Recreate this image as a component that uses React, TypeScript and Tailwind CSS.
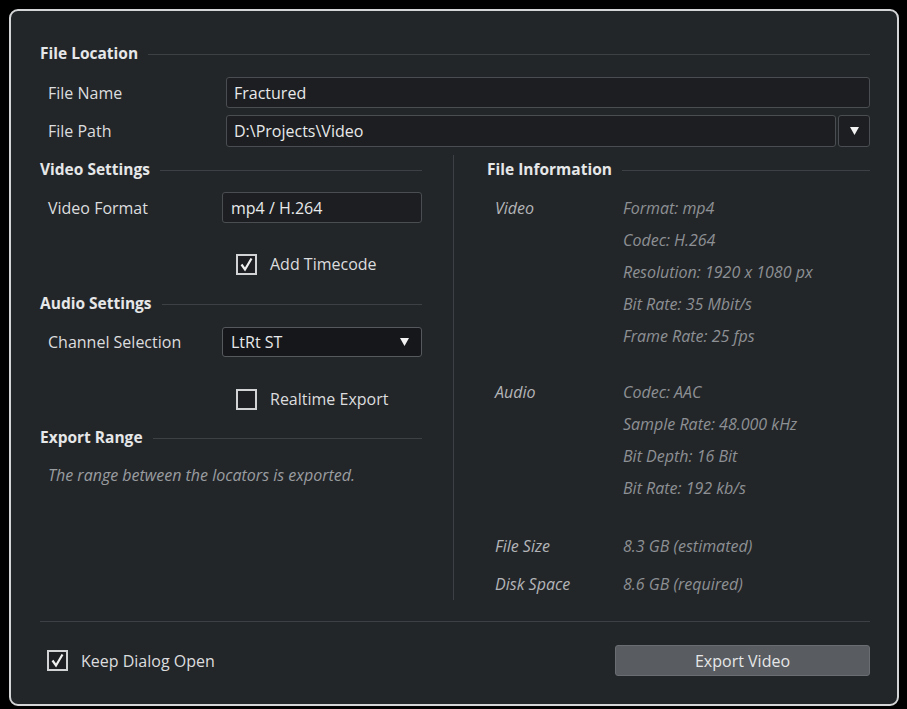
import React from "react";

const font = { fontFamily: '"Open Sans", "Liberation Sans", sans-serif' };

function SectionHeader({ title }: { title: string }) {
  return (
    <div className="flex h-5 items-center gap-[10px]">
      <span className="text-[15.5px] font-bold leading-5 text-[#e6e7e8]">{title}</span>
      <div className="mt-[3px] h-px flex-1 bg-[#3d4044]" />
    </div>
  );
}

function Check({ checked }: { checked: boolean }) {
  return (
    <div className="flex h-[21px] w-[21px] items-center justify-center border-2 border-[#d2d3d4] bg-[#1d1f22]">
      {checked && (
        <svg width="15" height="15" viewBox="0 0 15 15">
          <path d="M2.5 7.5 L6 12.5 L12.5 1.5" fill="none" stroke="#f0f0f0" strokeWidth="2.2" />
        </svg>
      )}
    </div>
  );
}

function Triangle() {
  return (
    <svg width="9" height="8" viewBox="0 0 9 8">
      <path d="M0 0 H9 L4.5 8 Z" fill="#f2f2f2" />
    </svg>
  );
}

function InfoRow({ label, value }: { label?: string; value: string }) {
  return (
    <div className="flex h-8 items-center pl-[8px] text-[16px] italic">
      <span className="w-[128px] text-[#b3b5b8]">{label}</span>
      <span className="text-[#8d9094]">{value}</span>
    </div>
  );
}

export default function App() {
  return (
    <div className="h-[709px] w-[907px] bg-black pl-[9px] pt-[9px]" style={font}>
      <div className="flex h-[697px] w-[890px] flex-col rounded-[9px] border-2 border-[#d4d5d6] bg-[#232629] pl-[29px] pr-[27px] pt-[32px]">
        <SectionHeader title="File Location" />

        <div className="mt-[14px] flex h-[31px] items-center">
          <span className="w-[186px] pl-[8px] text-[16px] text-[#dcdddf]">File Name</span>
          <div className="flex h-full flex-1 items-center rounded-[3px] border border-[#4a4d51] bg-[#1c1e21] px-[7px] text-[16px] text-[#e8e9ea]">
            Fractured
          </div>
        </div>

        <div className="mt-[7px] flex h-[32px] items-center">
          <span className="w-[186px] pl-[8px] text-[16px] text-[#dcdddf]">File Path</span>
          <div className="flex h-full flex-1 items-center rounded-[3px] border border-[#4a4d51] bg-[#1c1e21] px-[7px] text-[16px] text-[#e8e9ea]">
            D:\Projects\Video
          </div>
          <div className="ml-[2px] flex h-full w-[32px] items-center justify-center rounded-[3px] border border-[#4a4d51] bg-[#1c1e21]">
            <Triangle />
          </div>
        </div>

        <div className="mt-[8px] flex h-[445px]">
          {/* left: video / audio settings and export range */}
          <div className="flex w-[382px] flex-col pt-[4px]">
            <SectionHeader title="Video Settings" />
            <div className="mt-[13px] flex h-[31px] items-center">
              <span className="w-[182px] pl-[8px] text-[16px] text-[#dcdddf]">Video Format</span>
              <div className="flex h-full flex-1 items-center rounded-[3px] border border-[#4a4d51] bg-[#1c1e21] px-[8px] text-[16px] text-[#e8e9ea]">
                mp4 / H.264
              </div>
            </div>
            <div className="ml-[196px] mt-[30px] flex h-[22px] items-center gap-[13px]">
              <Check checked />
              <span className="text-[16px] text-[#dcdddf]">Add Timecode</span>
            </div>

            <div className="mt-[18px]">
              <SectionHeader title="Audio Settings" />
            </div>
            <div className="mt-[14px] flex h-[30px] items-center">
              <span className="w-[182px] pl-[8px] text-[16px] text-[#dcdddf]">Channel Selection</span>
              <div className="flex h-full flex-1 items-center justify-between rounded-[3px] border border-[#56595d] bg-[#15171a] pl-[8px] pr-[12px] text-[16px] text-[#e8e9ea]">
                <span>LtRt ST</span>
                <Triangle />
              </div>
            </div>
            <div className="ml-[196px] mt-[31px] flex h-[22px] items-center gap-[13px]">
              <Check checked={false} />
              <span className="text-[16px] text-[#dcdddf]">Realtime Export</span>
            </div>

            <div className="mt-[17px]">
              <SectionHeader title="Export Range" />
            </div>
            <p className="mt-[18px] pl-[8px] text-[16px] italic leading-5 text-[#9a9da0]">
              The range between the locators is exported.
            </p>
          </div>

          <div className="flex w-[65px] justify-center pr-[2px]">
            <div className="h-full w-px bg-[#3d4044]" />
          </div>

          {/* right: file information */}
          <div className="flex flex-1 flex-col pt-[4px]">
            <SectionHeader title="File Information" />
            <div className="mt-[13px]">
              <InfoRow label="Video" value="Format: mp4" />
              <InfoRow value="Codec: H.264" />
              <InfoRow value="Resolution: 1920 x 1080 px" />
              <InfoRow value="Bit Rate: 35 Mbit/s" />
              <InfoRow value="Frame Rate: 25 fps" />
            </div>
            <div className="mt-[24px]">
              <InfoRow label="Audio" value="Codec: AAC" />
              <InfoRow value="Sample Rate: 48.000 kHz" />
              <InfoRow value="Bit Depth: 16 Bit" />
              <InfoRow value="Bit Rate: 192 kb/s" />
            </div>
            <div className="mt-[26px]">
              <InfoRow label="File Size" value="8.3 GB (estimated)" />
            </div>
            <div className="mt-[6px]">
              <InfoRow label="Disk Space" value="8.6 GB (required)" />
            </div>
          </div>
        </div>

        <div className="mt-[21px] h-px bg-[#3d4044]" />

        <div className="mt-[23px] flex h-[31px] items-center justify-between">
          <div className="ml-[7px] flex items-center gap-[13px]">
            <Check checked />
            <span className="text-[16px] text-[#dcdddf]">Keep Dialog Open</span>
          </div>
          <button className="flex h-full w-[255px] items-center justify-center rounded-[3px] border border-[#6a6d71] bg-[#595c60] text-[16px] text-[#e6e7e8]">
            Export Video
          </button>
        </div>
      </div>
    </div>
  );
}
